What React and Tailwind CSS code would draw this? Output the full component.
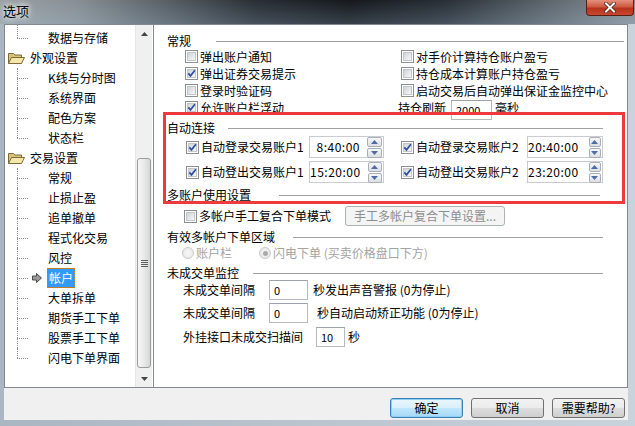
import React from "react";

function CheckBox({ checked }) {
  return (
    <span className="flex h-[13px] w-[13px] shrink-0 border border-[#8e8f8f] bg-white p-px">
      <span className="relative flex-1 border border-[#c3c7cd] bg-[linear-gradient(135deg,#cfd3d8,#f7f7f7)]">
        {checked && (
          <svg width="9" height="9" viewBox="0 0 9 9" className="absolute left-[-1px] top-[-1px]">
            <path d="M1.3 4.4 L3.5 6.9 L7.9 1.3" fill="none" stroke="#2f4e9e" strokeWidth="1.7" />
          </svg>
        )}
      </span>
    </span>
  );
}

function Radio({ checked }) {
  return (
    <span className="flex h-[12px] w-[12px] shrink-0 items-center justify-center rounded-full border border-[#c9c9c9] bg-[radial-gradient(circle,#f8f8f8,#e4e4e4)]">
      {checked && <span className="h-[5px] w-[5px] rounded-full bg-[#a9a9a9]" />}
    </span>
  );
}

function GroupTitle({ label, labelW, pr, className = "" }) {
  return (
    <div className={`flex h-[14px] items-center pl-[13px] ${pr} ${className}`}>
      <span className={`shrink-0 ${labelW}`}>{label}</span>
      <span className="h-px flex-1 bg-[#a0a0a0]" />
    </div>
  );
}

function Spin() {
  return (
    <div className="flex w-[15px] flex-col gap-px">
      <div className="flex h-[10px] items-center justify-center rounded-[2px] border border-[#a9b0b8] bg-[linear-gradient(#f6f6f6,#dcdfe3)]">
        <svg width="7" height="4" viewBox="0 0 7 4"><path d="M0 4 L3.5 0 L7 4 Z" fill="#4d6ca6" /></svg>
      </div>
      <div className="flex h-[10px] items-center justify-center rounded-[2px] border border-[#a9b0b8] bg-[linear-gradient(#f6f6f6,#dcdfe3)]">
        <svg width="7" height="4" viewBox="0 0 7 4"><path d="M0 0 L3.5 4 L7 0 Z" fill="#4d6ca6" /></svg>
      </div>
    </div>
  );
}

function TimeBox({ value, w, pr }) {
  return (
    <div className={`flex h-[22px] items-center border border-[#c9ccd1] bg-white pr-px ${w}`}>
      <span className={`flex-1 text-right tracking-[0.5px] ${pr}`}>{value}</span>
      <Spin />
    </div>
  );
}

function Field({ value, w }) {
  return (
    <div className={`flex h-[20px] items-center border border-[#b6b9c0] border-t-[#9ea2aa] bg-white pl-[4px] text-[11px] ${w}`}>
      {value}
    </div>
  );
}

function Folder() {
  return (
    <svg width="17" height="14" viewBox="0 0 17 14">
      <path d="M0.5 2.5 H5.5 L7 4 H13.5 V12.5 H0.5 Z" fill="#d9c27a" stroke="#7d6a3a" />
      <path d="M0.5 12.5 L3.5 6.5 H16.5 L13.5 12.5 Z" fill="#f5e7a9" stroke="#7d6a3a" />
    </svg>
  );
}

const treeRows = [
  { t: "数据与存储", child: true, last: true, first: true },
  { t: "外观设置", folder: true },
  { t: "K线与分时图", child: true },
  { t: "系统界面", child: true },
  { t: "配色方案", child: true },
  { t: "状态栏", child: true, last: true },
  { t: "交易设置", folder: true },
  { t: "常规", child: true },
  { t: "止损止盈", child: true },
  { t: "追单撤单", child: true },
  { t: "程式化交易", child: true },
  { t: "风控", child: true },
  { t: "帐户", child: true, selected: true },
  { t: "大单拆单", child: true },
  { t: "期货手工下单", child: true },
  { t: "股票手工下单", child: true },
  { t: "闪电下单界面", child: true, last: true },
];

function TreeRow({ row }) {
  return (
    <div className="relative flex h-[20px] items-center">
      {row.child && (
        <>
          <span
            className={`absolute left-[12px] border-l border-dotted border-[#8c8c8c] ${
              row.first ? "top-[-3px]" : "top-0"
            } ${row.last ? "h-[10px]" : "h-[20px]"} ${row.first ? "h-[13px]" : ""}`}
          />
          <span className="absolute left-[12px] top-[10px] w-[11px] border-t border-dotted border-[#8c8c8c]" />
        </>
      )}
      {row.folder ? (
        <>
          <span className="ml-[3px] flex w-[22px]">
            <Folder />
          </span>
          <span>{row.t}</span>
        </>
      ) : row.selected ? (
        <>
          <svg width="10" height="10" viewBox="0 0 10 10" className="absolute left-[27px] top-[5px]">
            <path d="M0.5 3 H4.5 V0.5 L9.5 5 L4.5 9.5 V7 H0.5 Z" fill="#9a9a9a" stroke="#4a4a4a" />
          </svg>
          <span className="ml-[42px] border border-dotted border-[#c87f2a] bg-[#3399ff] px-px leading-[18px] text-white">
            {row.t}
          </span>
        </>
      ) : (
        <span className="ml-[43px]">{row.t}</span>
      )}
    </div>
  );
}

function ScrollBar() {
  return (
    <div className="flex w-[17px] flex-col border-l border-[#e6e6e6] bg-[#f0f0f0]">
      <div className="flex h-[17px] items-center justify-center">
        <svg width="7" height="4" viewBox="0 0 7 4"><path d="M0 4 L3.5 0 L7 4 Z" fill="#444" /></svg>
      </div>
      <div className="flex flex-1 flex-col">
        <div className="mx-px mt-[116px] flex h-[210px] flex-col items-center justify-center gap-px rounded-[3px] border border-[#9b9b9b] bg-[linear-gradient(90deg,#f7f7f7,#e9e9e9_50%,#d6d6d6)]">
          <span className="h-px w-[7px] bg-[#5f5f5f]" />
          <span className="h-px w-[7px] bg-[#5f5f5f]" />
          <span className="h-px w-[7px] bg-[#5f5f5f]" />
          <span className="h-px w-[7px] bg-[#5f5f5f]" />
        </div>
      </div>
      <div className="flex h-[17px] items-center justify-center">
        <svg width="7" height="4" viewBox="0 0 7 4"><path d="M0 0 L3.5 4 L7 0 Z" fill="#444" /></svg>
      </div>
    </div>
  );
}

function WinButton({ children, primary }) {
  return (
    <div
      className={`flex h-[20px] w-[73px] items-center justify-center rounded-[3px] border ${
        primary
          ? "border-[#3c7fb1] bg-[linear-gradient(#eaf6fd_0%,#d9f0fc_50%,#bee6fd_51%,#a7d9f5_100%)] shadow-[inset_0_0_0_1px_#8ed0f5]"
          : "border-[#707070] bg-[linear-gradient(#f2f2f2_0%,#ebebeb_50%,#dddddd_51%,#cfcfcf_100%)]"
      }`}
    >
      {children}
    </div>
  );
}

export default function App() {
  return (
    <div className="flex h-[426px] w-[635px] flex-col overflow-hidden bg-[linear-gradient(90deg,#aab6c2,#c9d3dc)] text-[12px] leading-[14px] text-black font-['Noto_Sans_CJK_SC','Liberation_Sans',sans-serif]">
      {/* title bar */}
      <div className="relative flex h-[24px] shrink-0 items-start bg-[linear-gradient(90deg,#a3aaae_0%,#8f979c_12%,#5d656b_26%,#2b3137_40%,#161a1e_55%,#2a3138_70%,#5a636a_84%,#9098a0_100%)]">
        <div className="absolute inset-0 bg-[linear-gradient(180deg,rgba(0,0,0,0.05),rgba(150,175,200,0.25))]" />
        <span className="relative ml-[3px] mt-[3px] text-[13px] leading-[15px] [text-shadow:0_0_5px_#ffffff,0_0_8px_#ffffff]">
          选项
        </span>
        <div className="absolute right-[1px] top-0 flex h-[16px] w-[48px] items-center justify-center rounded-b-[4px] border border-t-0 border-[#5a1d14] bg-[linear-gradient(#e6907e_0%,#cc5a42_45%,#b8321d_55%,#c9482e_100%)]">
          <svg width="12" height="11" viewBox="0 0 12 11">
            <path d="M2 1.5 L10 9.5 M10 1.5 L2 9.5" stroke="#3b1a14" strokeWidth="3.4" strokeLinecap="square" />
            <path d="M2 1.5 L10 9.5 M10 1.5 L2 9.5" stroke="#ffffff" strokeWidth="2" strokeLinecap="square" />
          </svg>
        </div>
      </div>

      {/* client */}
      <div className="ml-[4px] mr-[7px] flex h-[396px] flex-col bg-[#f0f0f0]">
        <div className="flex h-[364px]">
          {/* tree */}
          <div className="flex h-[364px] w-[150px] border border-[#828790] bg-white">
            <div className="relative w-[130px] overflow-hidden pt-[3px]">
              {treeRows.map((r) => (
                <TreeRow key={r.t} row={r} />
              ))}
            </div>
            <ScrollBar />
          </div>

          {/* right panel */}
          <div className="relative flex h-[364px] w-[474px] flex-col border-y border-r border-[#828790] bg-white">
            <GroupTitle label="常规" labelW="w-[49px]" pr="pr-[3px]" className="mt-[9px]" />

            {[
              ["弹出账户通知", false, "对手价计算持仓账户盈亏", false],
              ["弹出证券交易提示", true, "持仓成本计算账户持仓盈亏", false],
              ["登录时验证码", false, "启动交易后自动弹出保证金监控中心", false],
            ].map(([a, ac, b, bc]) => (
              <div key={a} className="flex h-[17px] items-center">
                <div className="flex w-[247px] items-center gap-[2px] pl-[31px]">
                  <CheckBox checked={ac} />
                  <span>{a}</span>
                </div>
                <div className="flex items-center gap-[2px]">
                  <CheckBox checked={bc} />
                  <span>{b}</span>
                </div>
              </div>
            ))}
            <div className="flex h-[17px] items-center">
              <div className="flex w-[244px] items-center gap-[2px] pl-[31px]">
                <CheckBox checked />
                <span>允许账户栏浮动</span>
              </div>
              <span className="w-[53px]">持仓刷新</span>
              <div className="mt-[4px]">
                <Field value="2000" w="w-[41px]" />
              </div>
              <span className="ml-[3px]">毫秒</span>
            </div>

            <GroupTitle label="自动连接" labelW="w-[61px]" pr="pr-[24px]" className="mt-[5px]" />

            {[
              ["自动登录交易账户1", "8:40:00", "自动登录交易账户2", "20:40:00", "mt-px"],
              ["自动登出交易账户1", "15:20:00", "自动登出交易账户2", "23:20:00", "mt-[3px]"],
            ].map(([a, at, b, bt, m]) => (
              <div key={a} className={`flex h-[22px] items-center ${m}`}>
                <div className="flex w-[247px] items-center pl-[32px]">
                  <CheckBox checked />
                  <span className="ml-[2px] w-[108px]">{a}</span>
                  <TimeBox value={at} w="w-[75px]" pr="pr-[7px]" />
                </div>
                <div className="flex items-center">
                  <CheckBox checked />
                  <span className="ml-[2px] w-[111px]">{b}</span>
                  <TimeBox value={bt} w="w-[76px]" pr="pr-[10px]" />
                </div>
              </div>
            ))}

            <GroupTitle label="多账户使用设置" labelW="w-[112px]" pr="pr-[27px]" className="mt-[5px]" />

            <div className="mt-[4px] flex h-[20px] items-center">
              <div className="flex w-[191px] items-center gap-[2px] pl-[30px]">
                <CheckBox />
                <span>多帐户手工复合下单模式</span>
              </div>
              <div className="flex h-[20px] w-[160px] items-center justify-center rounded-[3px] border border-[#adb2b5] bg-[#f4f4f4] text-[#8d8d8d]">
                手工多帐户复合下单设置...
              </div>
            </div>

            <GroupTitle label="有效多帐户下单区域" labelW="w-[126px]" pr="pr-[24px]" className="mt-[4px]" />

            <div className="mt-[2px] flex h-[14px] items-center text-[#a3a3a3]">
              <div className="flex w-[105px] items-center gap-[2px] pl-[28px]">
                <Radio />
                <span>账户栏</span>
              </div>
              <div className="flex items-center gap-[2px]">
                <Radio checked />
                <span>闪电下单 (买卖价格盘口下方)</span>
              </div>
            </div>

            <GroupTitle label="未成交单监控" labelW="w-[86px]" pr="pr-[24px]" className="mt-[6px]" />

            <div className="flex h-[20px] items-center pl-[29px]">
              <span className="w-[86px]">未成交单间隔</span>
              <Field value="0" w="w-[39px]" />
              <span className="ml-[5px]">秒发出声音警报 (0为停止)</span>
            </div>
            <div className="mt-[3px] flex h-[20px] items-center pl-[29px]">
              <span className="w-[86px]">未成交单间隔</span>
              <Field value="0" w="w-[39px]" />
              <span className="ml-[9px]">秒自动启动矫正功能 (0为停止)</span>
            </div>
            <div className="mt-[4px] flex h-[20px] items-center pl-[29px]">
              <span className="w-[133px]">外挂接口未成交扫描间</span>
              <Field value="10" w="w-[29px]" />
              <span className="ml-[3px]">秒</span>
            </div>

            {/* red annotation box */}
            <div className="pointer-events-none absolute left-[9px] top-[87px] h-[92px] w-[462px] border-[3px] border-[#ef3a3d]" />
          </div>
        </div>

        {/* buttons */}
        <div className="flex flex-1 items-start justify-end gap-[8px] pr-[3px] pt-[10px]">
          <WinButton primary>确定</WinButton>
          <WinButton>取消</WinButton>
          <WinButton>需要帮助?</WinButton>
        </div>
      </div>
    </div>
  );
}
